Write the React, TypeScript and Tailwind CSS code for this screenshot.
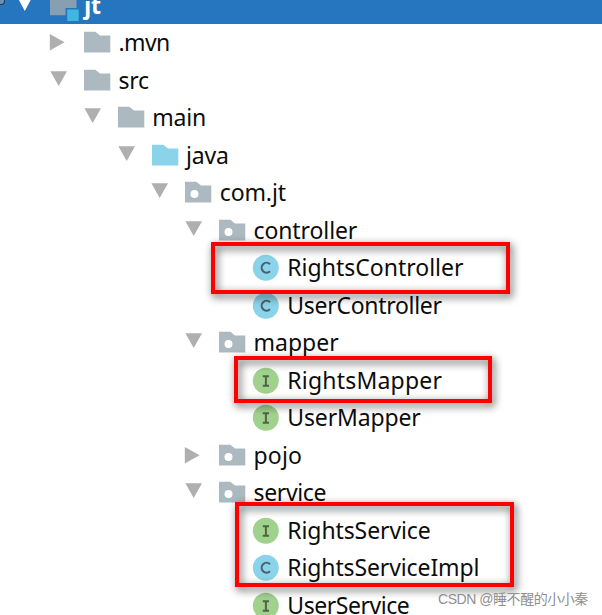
import type { ReactNode } from 'react';

type Kind = 'folder' | 'source' | 'package' | 'class' | 'interface';
type Item = { label: string; kind: Kind; indent: string; arrow?: 'open' | 'closed'; tracking?: string };

const items: Item[] = [
  { label: '.mvn', kind: 'folder', indent: 'pl-[50px]', arrow: 'closed', tracking: 'tracking-[-0.6px]' },
  { label: 'src', kind: 'folder', indent: 'pl-[50px]', arrow: 'open', tracking: 'tracking-[-0.3px]' },
  { label: 'main', kind: 'folder', indent: 'pl-[83.8px]', arrow: 'open', tracking: 'tracking-[-0.2px]' },
  { label: 'java', kind: 'source', indent: 'pl-[117.5px]', arrow: 'open', tracking: 'tracking-[-0.2px]' },
  { label: 'com.jt', kind: 'package', indent: 'pl-[151.2px]', arrow: 'open', tracking: 'tracking-[-0.1px]' },
  { label: 'controller', kind: 'package', indent: 'pl-[185px]', arrow: 'open', tracking: 'tracking-[-0.1px]' },
  { label: 'RightsController', kind: 'class', indent: 'pl-[218.8px]' },
  { label: 'UserController', kind: 'class', indent: 'pl-[218.8px]', tracking: 'tracking-[-0.3px]' },
  { label: 'mapper', kind: 'package', indent: 'pl-[185px]', arrow: 'open' },
  { label: 'RightsMapper', kind: 'interface', indent: 'pl-[218.8px]', tracking: 'tracking-[0.2px]' },
  { label: 'UserMapper', kind: 'interface', indent: 'pl-[218.8px]', tracking: 'tracking-[-0.15px]' },
  { label: 'pojo', kind: 'package', indent: 'pl-[185px]', arrow: 'closed', tracking: 'tracking-[0.2px]' },
  { label: 'service', kind: 'package', indent: 'pl-[185px]', arrow: 'open', tracking: 'tracking-[-0.35px]' },
  { label: 'RightsService', kind: 'interface', indent: 'pl-[218.8px]', tracking: 'tracking-[-0.1px]' },
  { label: 'RightsServiceImpl', kind: 'class', indent: 'pl-[218.8px]', tracking: 'tracking-[-0.12px]' },
  { label: 'UserService', kind: 'interface', indent: 'pl-[218.8px]', tracking: 'tracking-[-0.45px]' },
];

function Arrow({ state }: { state?: 'open' | 'closed' }) {
  return (
    <svg className="h-[38px] w-[34px] shrink-0 overflow-visible" viewBox="0 0 34 38" fill="#afafaf">
      {state === 'open' && <path d="M.4 9.2h16.6L8.7 24z" />}
      {state === 'closed' && <path d="M-.2 10v16.6l14.8-8.3z" />}
    </svg>
  );
}

function Icon({ kind }: { kind: Kind }) {
  let art: ReactNode;
  if (kind === 'class' || kind === 'interface') {
    art = (
      <>
        <circle cx="12.8" cy="18.7" r="13" fill={kind === 'class' ? '#8bd3ea' : '#a0d28d'} />
        {kind === 'class' ? (
          <path d="M17 15.2A4.9 4.9 0 1 0 17 22.2" fill="none" stroke="#48616b" strokeWidth="2.1" />
        ) : (
          <path d="M9.8 14.2h6.2M12.9 14.2v9.6M9.8 23.8h6.2" fill="none" stroke="#50634a" strokeWidth="2" />
        )}
      </>
    );
  } else {
    art = (
      <>
        <path d="M0 7.8H11.3L16 11.5H26.3V28.5H0z" fill={kind === 'source' ? '#8bd3ea' : '#adb9c0'} />
        {kind === 'package' && <circle cx="9.5" cy="20" r="4" fill="white" />}
      </>
    );
  }
  return (
    <svg className="h-[38px] w-[27px] shrink-0 overflow-visible" viewBox="0 0 27 38">
      {art}
    </svg>
  );
}

export default function App() {
  return (
    <main className="relative h-[615px] w-[602px] overflow-hidden bg-white font-['Noto_Sans','Noto_Sans_CJK_SC',sans-serif] text-[#0c0c0c]">
      <header className="flex h-6 items-start overflow-hidden bg-[#2675bf]">
        <span className="h-[5px] w-[5px] shrink-0 rounded-br-sm border-r border-b border-[#26384a] bg-[#6592bd]" />
        <svg className="ml-[11.2px] h-6 w-[34px] shrink-0" viewBox="0 0 34 24">
          <path d="M.8-4h16L8.8 11z" fill="white" />
        </svg>
        <svg className="h-6 w-[27px] shrink-0 overflow-visible" viewBox="0 0 27 24">
          <path d="M0-4h26.5V8H15.5v7.3H0z" fill="#879fb1" />
          <path d="M17.2 9.5h11.5V21H17.2z" fill="#40b6e0" />
        </svg>
        <span className="-mt-[13px] ml-[7px] text-[23px] leading-[36px] font-bold text-white">jt</span>
      </header>
      <ul>
        {items.map((item) => (
          <li key={item.label} className={`flex h-[37.5px] items-start ${item.indent}`}>
            <Arrow state={item.arrow} />
            <Icon kind={item.kind} />
            <span className={`ml-[7.5px] text-[23px] leading-[36.5px] whitespace-nowrap ${item.tracking ?? ''}`}>
              {item.label}
            </span>
          </li>
        ))}
      </ul>
      <div className="absolute top-[242px] left-[211px] h-[52px] w-[298.5px] border-4 border-[#ff0000] drop-shadow-[2px_3px_4px_rgba(0,0,0,0.7)]" />
      <div className="absolute top-[356px] left-[233.5px] h-[47px] w-[258.5px] border-4 border-[#ff0000] drop-shadow-[2px_3px_4px_rgba(0,0,0,0.7)]" />
      <div className="absolute top-[502px] left-[235px] h-[85px] w-[278.5px] border-4 border-[#ff0000] drop-shadow-[2px_3px_4px_rgba(0,0,0,0.7)]" />
      <p className="absolute top-[589px] left-[438px] font-['Liberation_Sans','Noto_Sans_CJK_SC',sans-serif] text-[14px] leading-5 tracking-[-0.45px] whitespace-nowrap text-[#8f8f8f]">
        CSDN @睡不醒的小小秦
      </p>
    </main>
  );
}
